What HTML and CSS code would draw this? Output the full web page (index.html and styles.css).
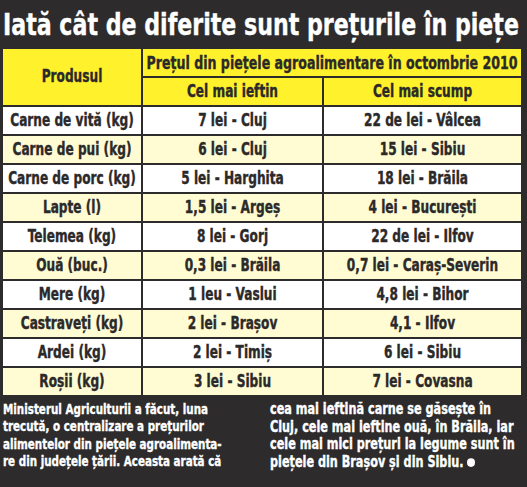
FILE: index.html
```html
<!DOCTYPE html>
<html lang="ro">
<head>
  <meta charset="UTF-8">
  <meta name="viewport" content="width=device-width, initial-scale=1.0">
  <title>Prețuri în piețe</title>
  <link rel="stylesheet" href="styles.css">
</head>
<body>
  <h1 class="title"><span>Iată cât de diferite sunt prețurile în piețe</span></h1>

  <!-- tabelul de preturi -->
  <div class="prices">
    <div class="head">
      <div class="cell product"><span>Produsul</span></div>
      <div class="cell period"><span>Prețul din piețele agroalimentare în octombrie 2010</span></div>
      <div class="cell"><span>Cel mai ieftin</span></div>
      <div class="cell"><span>Cel mai scump</span></div>
    </div>
    <div class="row">
      <div class="cell"><span>Carne de vită (kg)</span></div>
      <div class="cell"><span>7 lei - Cluj</span></div>
      <div class="cell"><span>22 de lei - Vâlcea</span></div>
    </div>
    <div class="row">
      <div class="cell"><span>Carne de pui (kg)</span></div>
      <div class="cell"><span>6 lei - Cluj</span></div>
      <div class="cell"><span>15 lei - Sibiu</span></div>
    </div>
    <div class="row">
      <div class="cell"><span>Carne de porc (kg)</span></div>
      <div class="cell"><span>5 lei - Harghita</span></div>
      <div class="cell"><span>18 lei - Brăila</span></div>
    </div>
    <div class="row">
      <div class="cell"><span>Lapte (l)</span></div>
      <div class="cell"><span>1,5 lei - Argeș</span></div>
      <div class="cell"><span>4 lei - București</span></div>
    </div>
    <div class="row">
      <div class="cell"><span>Telemea (kg)</span></div>
      <div class="cell"><span>8 lei - Gorj</span></div>
      <div class="cell"><span>22 de lei - Ilfov</span></div>
    </div>
    <div class="row">
      <div class="cell"><span>Ouă (buc.)</span></div>
      <div class="cell"><span>0,3 lei - Brăila</span></div>
      <div class="cell"><span>0,7 lei - Caraș-Severin</span></div>
    </div>
    <div class="row">
      <div class="cell"><span>Mere (kg)</span></div>
      <div class="cell"><span>1 leu - Vaslui</span></div>
      <div class="cell"><span>4,8 lei - Bihor</span></div>
    </div>
    <div class="row">
      <div class="cell"><span>Castraveți (kg)</span></div>
      <div class="cell"><span>2 lei - Brașov</span></div>
      <div class="cell"><span>4,1 - Ilfov</span></div>
    </div>
    <div class="row">
      <div class="cell"><span>Ardei (kg)</span></div>
      <div class="cell"><span>2 lei - Timiș</span></div>
      <div class="cell"><span>6 lei - Sibiu</span></div>
    </div>
    <div class="row">
      <div class="cell"><span>Roșii (kg)</span></div>
      <div class="cell"><span>3 lei - Sibiu</span></div>
      <div class="cell"><span>7 lei - Covasna</span></div>
    </div>
  </div>

  <div class="notes">
    <p class="left">Ministerul Agriculturii a făcut, luna<br>trecută, o centralizare a prețurilor<br>alimentelor din piețele agroalimenta-<br>re din județele țării. Aceasta arată că</p>
    <p class="right">cea mai ieftină carne se găsește în<br>Cluj, cele mai ieftine ouă, în Brăila, iar<br>cele mai mici prețuri la legume sunt în<br>piețele din Brașov și din Sibiu. <i class="dot"></i></p>
  </div>
</body>
</html>
```

FILE: styles.css
```css
body {
  margin: 0;
  min-height: 100vh;
  background-color: #2d2b2b;
  color: #fff;
  font-family: "DejaVu Sans Condensed", "DejaVu Sans", sans-serif;
  font-stretch: condensed;
  font-weight: bold;
  -webkit-text-stroke: 0.3px currentColor;
  overflow: hidden;
}
/* the print font is a tall condensed face: size it to the width, then stretch it up */
.title {
  margin: 7px 0 6px 3px;
  height: 36px;
  font-size: 24.6px;
  line-height: 36px;
  white-space: nowrap;
}
.title span {
  display: inline-block;
  transform: scaleY(1.22);
}
.prices {
  display: grid;
  grid-template-columns: 138px 179px 197px;
  grid-auto-rows: 27px;
  gap: 2px;
  margin-left: 3px;
}
.head, .row {
  display: contents;
}
.cell {
  display: flex;
  align-items: center;
  justify-content: center;
  background-color: #fff;
  color: #2b2929;
  font-size: 13.5px;
  line-height: 1;
  white-space: nowrap;
}
.cell span {
  display: inline-block;
  transform: scaleY(1.333);
}
.head .cell {
  background-color: #fff22c;
}
.head .product {
  grid-row: span 2;
}
.head .period {
  grid-column: span 2;
  font-size: 14px;
}
.head .period span {
  transform: scaleY(1.28);
}
.row:nth-child(odd) .cell {
  background-color: #fffbd3;
}
.notes {
  display: grid;
  grid-template-columns: 252px 251px;
  column-gap: 15px;
  height: 76px;
  margin: 6px 0 0 3px;
}
.notes p {
  margin: 0;
  white-space: nowrap;
  transform-origin: 0 0;
}
.notes .left {
  font-size: 11.5px;
  line-height: 13.4px;
  transform: scaleY(1.29);
}
.notes .right {
  font-size: 12.5px;
  line-height: 14.2px;
  transform: scaleY(1.22);
}
.dot {
  display: inline-block;
  width: 8px;
  height: 6.6px;
  border-radius: 50%;
  background-color: #fff;
  vertical-align: 0;
}
```
